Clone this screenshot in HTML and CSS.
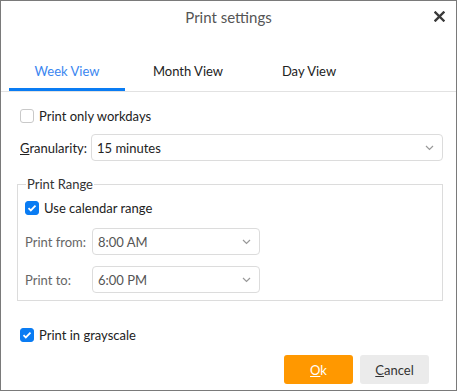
FILE: index.html
```html
<!DOCTYPE html>
<html lang="en">
<head>
  <meta charset="UTF-8">
  <title>Print settings</title>
  <link rel="stylesheet" href="styles.css">
</head>
<body>

  <div class="dialog">
    <div class="dialog-header">
      <span></span>
      <div class="dialog-title">Print settings</div>
      <button class="close-btn" aria-label="Close">
        <svg width="11" height="11" viewBox="0 0 11 11">
          <path d="M1.5 1.5 L9.5 9.5 M9.5 1.5 L1.5 9.5" stroke="#3a3a3a" stroke-width="2.4" stroke-linecap="square"/>
        </svg>
      </button>
    </div>

    <div class="tabs">
      <div class="tab active">Week View</div>
      <div class="tab">Month View</div>
      <div class="tab">Day View</div>
    </div>

    <div class="content">
      <label class="check-row first">
        <span class="box"></span>
        <span>Print only workdays</span>
      </label>

      <div class="field-row gran">
        <span class="field-label gran-label"><u>G</u>ranularity:</span>
        <div class="select wide">
          <span>15 minutes</span>
          <svg class="chev" width="9" height="6" viewBox="0 0 9 6"><path d="M1 1 L4.5 4.5 L8 1" fill="none" stroke="#999" stroke-width="1.2"/></svg>
        </div>
      </div>

      <fieldset class="range">
        <legend>Print Range</legend>
        <label class="check-row">
          <span class="box checked">
            <svg width="10" height="8" viewBox="0 0 10 8"><path d="M1.5 4.2 L3.8 6.4 L8.5 1.6" fill="none" stroke="#fff" stroke-width="1.8"/></svg>
          </span>
          <span>Use calendar range</span>
        </label>
        <div class="field-row from">
          <span class="field-label dim">Print from:</span>
          <div class="select narrow">
            <span>8:00 AM</span>
            <svg class="chev" width="9" height="6" viewBox="0 0 9 6"><path d="M1 1 L4.5 4.5 L8 1" fill="none" stroke="#999" stroke-width="1.2"/></svg>
          </div>
        </div>
        <div class="field-row to">
          <span class="field-label dim">Print to:</span>
          <div class="select narrow">
            <span>6:00 PM</span>
            <svg class="chev" width="9" height="6" viewBox="0 0 9 6"><path d="M1 1 L4.5 4.5 L8 1" fill="none" stroke="#999" stroke-width="1.2"/></svg>
          </div>
        </div>
      </fieldset>

      <label class="check-row gray">
        <span class="box checked">
          <svg width="10" height="8" viewBox="0 0 10 8"><path d="M1.5 4.2 L3.8 6.4 L8.5 1.6" fill="none" stroke="#fff" stroke-width="1.8"/></svg>
        </span>
        <span>Print in grayscale</span>
      </label>

      <div class="buttons">
        <button class="btn btn-ok"><u>O</u>k</button>
        <button class="btn btn-cancel"><u>C</u>ancel</button>
      </div>
    </div>
  </div>

</body>
</html>
```

FILE: styles.css
```css
body {
  margin: 0;
  font-family: 'Lato', 'Liberation Sans', sans-serif;
  font-size: 13px;
  color: #222;
  background: #fff;
}

.dialog {
  width: 457px;
  height: 391px;
  box-sizing: border-box;
  border: 1px solid #7a7a7a;
  display: flex;
  flex-direction: column;
}

.dialog-header {
  height: 31px;
  display: grid;
  grid-template-columns: 1fr auto 1fr;
  align-items: center;
}

.dialog-title {
  font-size: 15px;
  color: #555;
}

.close-btn {
  justify-self: end;
  margin-right: 10px;
  border: none;
  background: none;
  padding: 0;
  width: 14px;
  height: 14px;
  display: flex;
  align-items: center;
  justify-content: center;
}

.tabs {
  margin-top: 21px;
  padding-left: 8px;
  display: flex;
  gap: 5px;
  border-bottom: 1px solid #e2e2e2;
}

.tab {
  width: 116px;
  height: 38px;
  box-sizing: border-box;
  padding-bottom: 3px;
  display: flex;
  align-items: center;
  justify-content: center;
  color: #222;
}

.tab.active {
  color: #3a86f0;
  border-bottom: 3px solid #0a7cf3;
  padding-bottom: 0;
}

.content {
  padding: 0 14px 0 19px;
  display: flex;
  flex-direction: column;
}

.check-row {
  display: flex;
  align-items: center;
  gap: 5px;
  height: 16px;
}

.check-row.first {
  margin-top: 16px;
}

.box {
  flex-shrink: 0;
  width: 14px;
  height: 14px;
  box-sizing: border-box;
  border: 1px solid #c9c9c9;
  border-radius: 3px;
  display: flex;
  align-items: center;
  justify-content: center;
}

.box.checked {
  background: #0a7cf3;
  border-color: #0a7cf3;
}

.field-row {
  display: flex;
  align-items: center;
}

.gran {
  margin-top: 10px;
}

.field-label {
  flex-shrink: 0;
  width: 71px;
}

.field-label.dim {
  color: #666;
  width: 67px;
}

.select {
  flex-shrink: 0;
  height: 27px;
  box-sizing: border-box;
  border: 1px solid #dcdcdc;
  border-radius: 4px;
  padding: 0 8px 0 5px;
  display: flex;
  align-items: center;
  justify-content: space-between;
}

.select.wide {
  width: 352px;
}

.select.narrow {
  width: 168px;
  color: #555;
}

.range {
  display: block;
  margin: 15px 0 0 -3px;
  width: 426px;
  height: 125px;
  box-sizing: border-box;
  border: 1px solid #dcdcdc;
  padding: 0 0 0 7px;
}

.range legend {
  padding: 0 1px;
  margin-left: 1px;
  color: #333;
}

.range .check-row {
  margin-top: 8px;
}

.range .from {
  margin-top: 12px;
}

.range .to {
  margin-top: 11px;
}

.check-row.gray {
  margin-top: 26px;
}

.buttons {
  margin-top: 12px;
  padding-right: 13px;
  display: flex;
  justify-content: flex-end;
  gap: 7px;
}

.btn {
  width: 69px;
  height: 29px;
  border: none;
  border-radius: 3px;
  font-family: inherit;
  font-size: 13px;
}

.btn-ok {
  background: #ff9800;
  color: #fff;
}

.btn-cancel {
  background: #ebebeb;
  color: #333;
}
```
